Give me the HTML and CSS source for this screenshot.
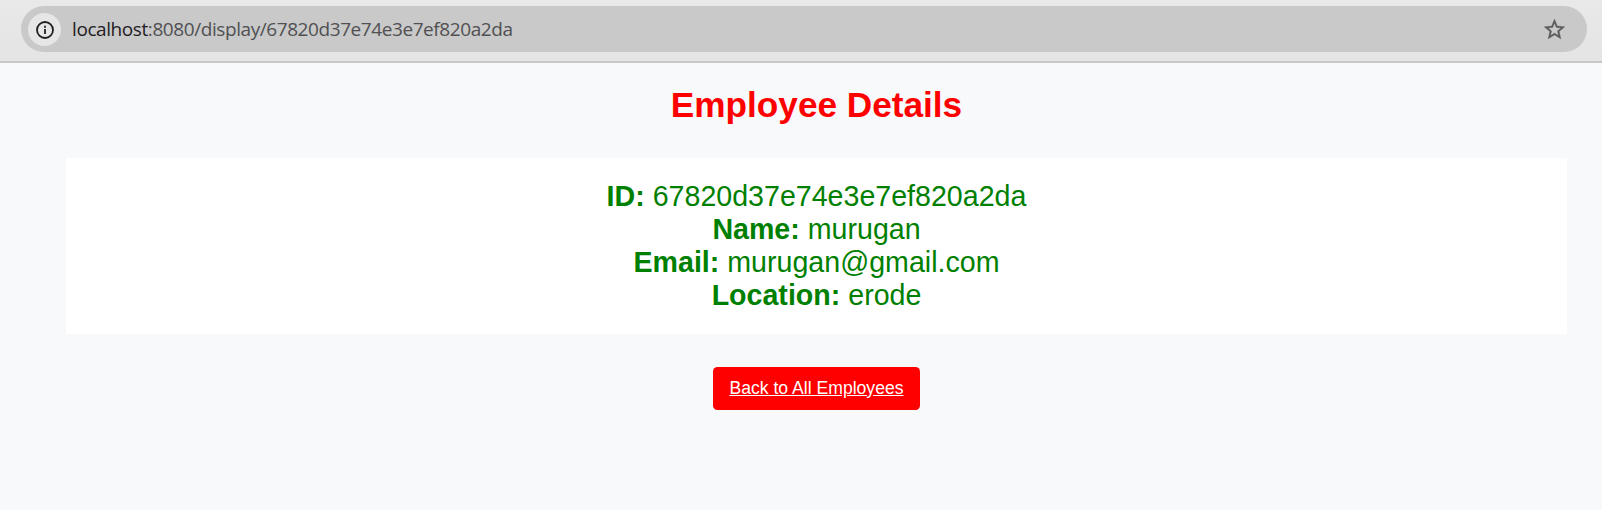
FILE: index.html
```html
<!DOCTYPE html>
<html lang="en">
<head>
<meta charset="utf-8">
<title>Employee Details</title>
<link rel="stylesheet" href="styles.css">
</head>
<body>
<header class="toolbar">
  <div class="address-bar">
    <span class="site-info">
      <svg width="18" height="18" viewBox="0 0 18 18" fill="none" stroke="#1f2023" stroke-width="1.8">
        <circle cx="9" cy="9" r="8"/>
        <path d="M9 8v5.1M9 4.7v2"/>
      </svg>
    </span>
    <span class="url"><span class="host">localhost</span>:8080/display/67820d37e74e3e7ef820a2da</span>
    <svg class="star" width="25" height="25" viewBox="0 0 24 24" fill="#5a5a5c" stroke="#5a5a5c" stroke-width="0.25">
      <path d="M22 9.24l-7.19-.62L12 2 9.19 8.63 2 9.24l5.46 4.73L5.82 21 12 17.27 18.18 21l-1.63-7.03L22 9.24zM12 15.4l-3.76 2.27 1-4.28-3.32-2.88 4.38-.38L12 6.1l1.71 4.04 4.38.38-3.32 2.88 1 4.28L12 15.4z"/>
    </svg>
  </div>
</header>
<main class="page">
  <h1 class="title">Employee Details</h1>
  <section class="card">
    <div><strong>ID:</strong> 67820d37e74e3e7ef820a2da</div>
    <div><strong>Name:</strong> murugan</div>
    <div><strong>Email:</strong> murugan@gmail.com</div>
    <div><strong>Location:</strong> erode</div>
  </section>
  <a class="back" href="#">Back to All Employees</a>
</main>
</body>
</html>
```
FILE: styles.css
```css
* { box-sizing: border-box; }
body {
  margin: 0;
  min-height: 510px;
  background: #f8f9fb;
  font-family: "Liberation Sans", Arial, sans-serif;
}
.toolbar {
  height: 63px;
  padding: 6px 15px 0 21px;
  background: linear-gradient(#e9e9e9, #e4e4e4);
  border-bottom: 2px solid #c7c7c7;
}
.address-bar {
  display: flex;
  align-items: center;
  height: 46px;
  padding: 0 20px 0 7px;
  border-radius: 23px;
  background: #c9c9c9;
}
.site-info {
  display: flex;
  align-items: center;
  justify-content: center;
  width: 33px;
  height: 33px;
  margin-top: 1px;
  border-radius: 50%;
  background: #e6e6e6;
}
.url {
  margin-left: 11px;
  font-family: "Open Sans", "Noto Sans", sans-serif;
  font-size: 19px;
  letter-spacing: -0.42px;
  line-height: 26px;
  color: #505052;
  white-space: nowrap;
}
.host { color: #1f2023; }
.star { margin-left: auto; }
.page {
  display: flex;
  flex-direction: column;
  align-items: center;
  padding: 22px 35px 0 66px;
}
.title {
  margin: 0 0 33px;
  font-size: 35.2px;
  line-height: 40px;
  color: #f00;
}
.card {
  align-self: stretch;
  padding: 22px;
  background: #fff;
  color: #008000;
  font-size: 28.6px;
  line-height: 33px;
  text-align: center;
}
.back {
  margin-top: 33px;
  padding: 11px 16.5px;
  border-radius: 4.5px;
  background: #f00;
  color: #fff;
  font-size: 17.6px;
  line-height: 21px;
}
```
